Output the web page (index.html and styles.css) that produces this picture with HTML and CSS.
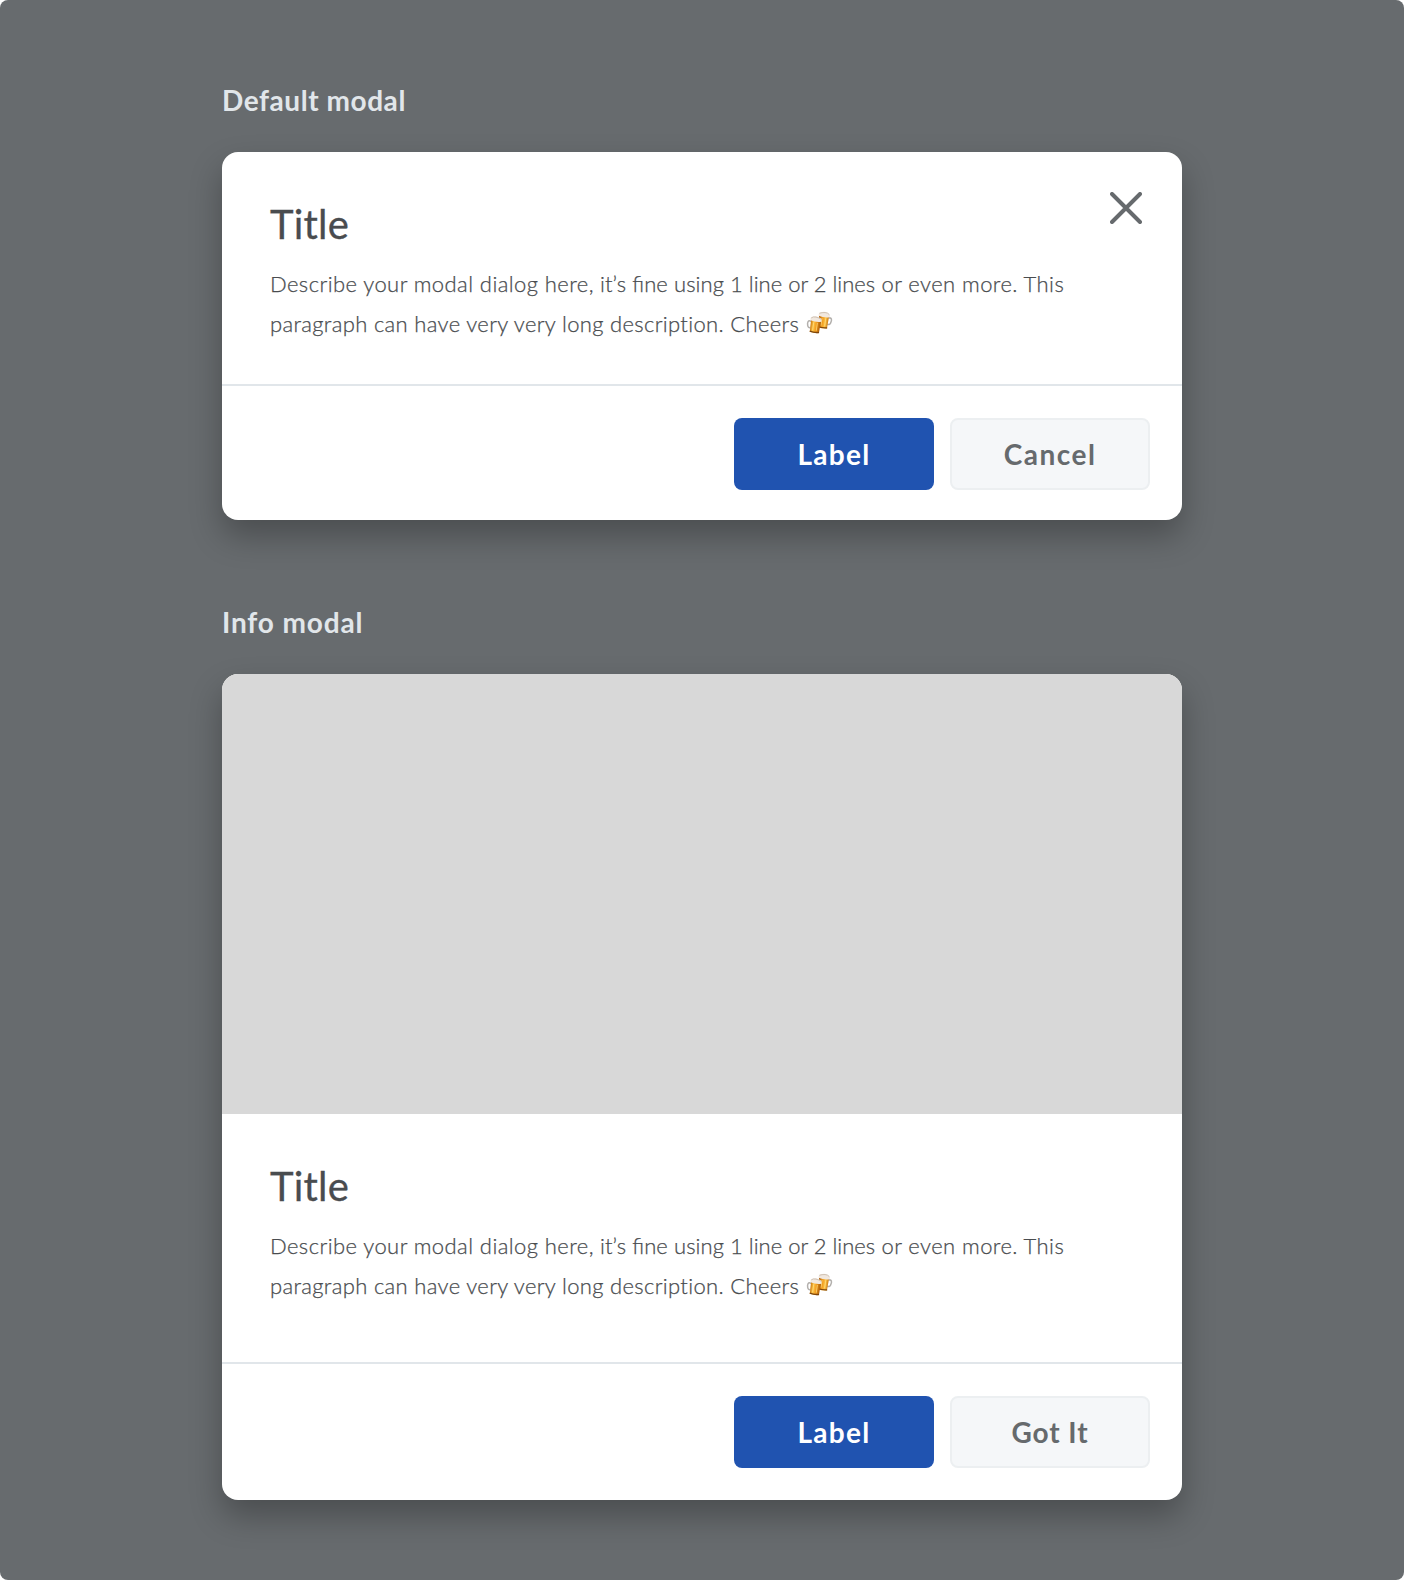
FILE: index.html
```html
<!DOCTYPE html>
<html lang="en">
<head>
<meta charset="utf-8">
<title>Modals</title>
<link rel="stylesheet" href="styles.css">
</head>
<body>
<svg width="0" height="0" class="defs" aria-hidden="true">
  <defs>
    <linearGradient id="beer" x1="0" y1="0" x2="1" y2="0">
      <stop offset="0" stop-color="#c9780f"/><stop offset=".3" stop-color="#ffc64a"/>
      <stop offset=".6" stop-color="#f09a1c"/><stop offset="1" stop-color="#a85c0c"/>
    </linearGradient>
    <symbol id="mug" viewBox="0 0 14 18" overflow="visible">
      <path d="M3 6.500C-.5 5-1 8 0 11c.5 1.800 1.800 2.200 3 1.600" fill="none" stroke="#b3b0ad" stroke-width="1.500"/>
      <path d="M2.500 4h10l-.4 13q-4.600 1-9.200 0z" fill="url(#beer)"/>
      <path d="M5.500 7v8M9.200 7v8" stroke="#ffdb7c" stroke-width="1" opacity=".8"/>
      <path d="M2.800 16.300q4.600 1.200 9.400 0" fill="none" stroke="#7d460d" stroke-width="1.300"/>
      <path d="M2 5.500Q1 2 4 1.700 7 0 10 1.400 13.500 1.500 13 5.500 7.500 7 2 5.500z" fill="#f1e8df"/>
      <path d="M2.500 3Q4 1.200 7 1.500T12.500 3" fill="none" stroke="#c9b9aa" stroke-width=".8"/>
    </symbol>
    <symbol id="cheers" viewBox="0 0 24 22" overflow="visible">
      <g transform="translate(24 0) scale(-1 1)"><use href="#mug" x="1" y="0" width="14" height="18" transform="rotate(-8 8 9)"/></g>
      <use href="#mug" x="0" y="4.500" width="14" height="18" transform="rotate(8 7 13)"/>
    </symbol>
  </defs>
</svg>
<main class="board">
  <h2 class="caption">Default modal</h2>
  <section class="modal">
    <div class="content">
      <div class="copy">
        <h3 class="title">Title</h3>
        <p class="text"><span class="wide">Describe your modal dialog here,</span><span class="snug"> it’s <span class="normal">fi</span>ne using</span><span class="normal"> 1 line or 2 lines</span><span class="wide"> or even more. This</span><br>paragraph can have very very long description. Cheers<svg class="cheers" role="img" aria-label="Cheers"><use href="#cheers"/></svg></p>
      </div>
      <button class="close" aria-label="Close"><svg width="32" height="32" viewBox="0 0 32 32"><path d="M2 2l28 28M30 2L2 30"/></svg></button>
    </div>
    <footer class="actions">
      <button class="button primary">Label</button>
      <button class="button secondary">Cancel</button>
    </footer>
  </section>

  <h2 class="caption info-caption">Info modal</h2>
  <section class="modal info">
    <div class="media"></div>
    <div class="content">
      <div class="copy">
        <h3 class="title">Title</h3>
        <p class="text"><span class="wide">Describe your modal dialog here,</span><span class="snug"> it’s <span class="normal">fi</span>ne using</span><span class="normal"> 1 line or 2 lines</span><span class="wide"> or even more. This</span><br>paragraph can have very very long description. Cheers<svg class="cheers" role="img" aria-label="Cheers"><use href="#cheers"/></svg></p>
      </div>
    </div>
    <footer class="actions">
      <button class="button primary">Label</button>
      <button class="button secondary dismiss">Got It</button>
    </footer>
  </section>
</main>
</body>
</html>
```
FILE: styles.css
```css
* { box-sizing: border-box; margin: 0; padding: 0; }
body { background: #fff; font-family: Lato, "Open Sans", sans-serif; }
.defs { display: block; }
.board { height: 1580px; padding: 80px 222px 0; background: #676b6e; border-radius: 8px; }
.caption { height: 72px; font-size: 28px; line-height: 40px; font-weight: 700; letter-spacing: .56px; color: #e1e6ea; }
.info-caption { margin-top: 82px; letter-spacing: .85px; }
.modal {
  display: flex; flex-direction: column; height: 368px; overflow: hidden;
  background: #fff; border-radius: 16px; box-shadow: 0 16px 32px rgba(0, 0, 0, .28);
}
.modal.info { height: 826px; }
.media { height: 440px; background: #d8d8d8; }
.content { display: flex; justify-content: space-between; height: 232px; padding: 40px 40px 0 48px; }
.info .content { height: 248px; }
.copy { white-space: nowrap; }
.title { font-size: 40px; line-height: 64px; font-weight: 400; letter-spacing: .2px; color: #494c4f; -webkit-text-stroke: .3px #494c4f; }
.text { margin-top: 8px; font-size: 22px; line-height: 40px; font-weight: 300; letter-spacing: .33px; color: #494c4f; -webkit-text-stroke: .25px #494c4f; }
.wide { letter-spacing: .42px; }
.snug { letter-spacing: .1px; }
.normal { letter-spacing: 0; }
.cheers { width: 24px; height: 22px; margin-left: 9px; vertical-align: -1px; overflow: visible; }
.close { width: 32px; height: 32px; border: 0; background: none; }
.close svg { display: block; fill: none; stroke: #666a6d; stroke-width: 4; stroke-linecap: round; }
.actions { display: flex; flex: 1; justify-content: flex-end; gap: 16px; padding: 32px 32px 0; border-top: 2px solid #e1e6ea; }
.button { width: 200px; height: 72px; border: 0; border-radius: 8px; font: 700 28px/72px Lato, "Open Sans", sans-serif; letter-spacing: 1.3px; }
.primary { background: #2053b0; color: #fff; }
.secondary { border: 2px solid #eceff1; background: #f5f7f9; color: #666a6d; line-height: 68px; letter-spacing: 1.5px; }
.dismiss { letter-spacing: .9px; }
```
